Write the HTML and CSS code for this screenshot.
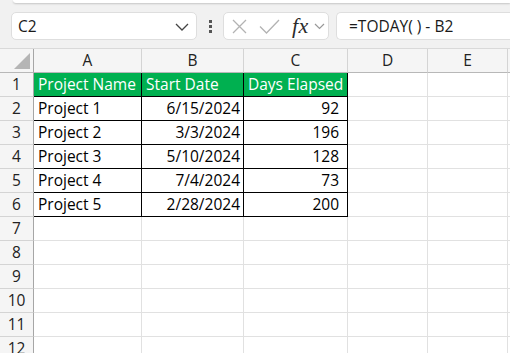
FILE: index.html
```html
<!DOCTYPE html>
<html>
<head>
<meta charset="utf-8">
<link rel="stylesheet" href="styles.css">
</head>
<body>
<div class="toolbar">
  <div class="top-strip"></div>
  <div class="bar">
    <div class="namebox">
      <span class="ref">C2</span>
      <svg class="chev" width="14" height="8" viewBox="0 0 14 8"><path d="M1 1 L7 7 L13 1" fill="none" stroke="#444" stroke-width="1.3"/></svg>
    </div>
    <div class="dots"><i></i><i></i><i></i></div>
    <div class="fbtns">
      <svg width="15" height="15" viewBox="0 0 15 15"><path d="M1 1 L14 14 M14 1 L1 14" stroke="#b3b3b3" stroke-width="1.3" fill="none"/></svg>
      <svg class="check" width="21" height="15" viewBox="0 0 21 15"><path d="M1 7.5 L7.5 14 L20 1" stroke="#b3b3b3" stroke-width="1.3" fill="none"/></svg>
      <span class="fx">fx</span>
      <svg width="11" height="7" viewBox="0 0 11 7"><path d="M1 1 L5.5 5.5 L10 1" fill="none" stroke="#999" stroke-width="1.2"/></svg>
    </div>
    <div class="formula">=TODAY( ) - B2</div>
  </div>
</div>
<div class="sheet">
  <div class="corner"><span class="tri"></span></div>
  <div class="ch">A</div><div class="ch">B</div><div class="ch">C</div><div class="ch">D</div><div class="ch">E</div><div class="ch edge"></div>

  <div class="rh">1</div>
  <div class="c t head">Project Name</div><div class="c t head">Start Date</div><div class="c t head">Days Elapsed</div><div class="c"></div><div class="c"></div><div class="c edge"></div>

  <div class="rh">2</div>
  <div class="c t">Project 1</div><div class="c t num">6/15/2024</div><div class="c t num wide">92</div><div class="c"></div><div class="c"></div><div class="c edge"></div>

  <div class="rh">3</div>
  <div class="c t">Project 2</div><div class="c t num">3/3/2024</div><div class="c t num wide">196</div><div class="c"></div><div class="c"></div><div class="c edge"></div>

  <div class="rh">4</div>
  <div class="c t">Project 3</div><div class="c t num">5/10/2024</div><div class="c t num wide">128</div><div class="c"></div><div class="c"></div><div class="c edge"></div>

  <div class="rh">5</div>
  <div class="c t">Project 4</div><div class="c t num">7/4/2024</div><div class="c t num wide">73</div><div class="c"></div><div class="c"></div><div class="c edge"></div>

  <div class="rh">6</div>
  <div class="c t">Project 5</div><div class="c t num">2/28/2024</div><div class="c t num wide">200</div><div class="c"></div><div class="c"></div><div class="c edge"></div>

  <div class="rh">7</div><div class="c"></div><div class="c"></div><div class="c"></div><div class="c"></div><div class="c"></div><div class="c edge"></div>
  <div class="rh">8</div><div class="c"></div><div class="c"></div><div class="c"></div><div class="c"></div><div class="c"></div><div class="c edge"></div>
  <div class="rh">9</div><div class="c"></div><div class="c"></div><div class="c"></div><div class="c"></div><div class="c"></div><div class="c edge"></div>
  <div class="rh">10</div><div class="c"></div><div class="c"></div><div class="c"></div><div class="c"></div><div class="c"></div><div class="c edge"></div>
  <div class="rh">11</div><div class="c"></div><div class="c"></div><div class="c"></div><div class="c"></div><div class="c"></div><div class="c edge"></div>
  <div class="rh">12</div><div class="c"></div><div class="c"></div><div class="c"></div><div class="c"></div><div class="c"></div><div class="c edge"></div>
</div>
</body>
</html>
```

FILE: styles.css
```css
html, body {
  margin: 0;
  padding: 0;
  width: 510px;
  height: 353px;
  overflow: hidden;
  background: #ffffff;
  font-family: "Open Sans", "Noto Sans", sans-serif;
}

.toolbar {
  height: 49px;
  box-sizing: border-box;
  background: #f1f1f1;
  border-bottom: 1px solid #d9d9d9;
}

.top-strip {
  height: 3px;
  margin-left: 13px;
  background: #ffffff;
  border-bottom-left-radius: 6px;
  box-shadow: 0 1px 2px rgba(0,0,0,0.18);
}

.bar {
  display: flex;
  align-items: center;
  margin-top: 9px;
  padding-left: 11px;
  height: 28px;
}

.namebox {
  width: 186px;
  height: 28px;
  box-sizing: border-box;
  background: #fff;
  border: 1px solid #dedede;
  border-radius: 5px;
  display: flex;
  align-items: center;
  justify-content: space-between;
  padding: 0 7px 0 6px;
}

.ref {
  font-size: 15.5px;
  color: #1a1a1a;
}

.chev {
  margin-top: 2px;
}

.dots {
  width: 26px;
  display: flex;
  flex-direction: column;
  align-items: center;
  gap: 2px;
}

.dots i {
  display: block;
  width: 3px;
  height: 3px;
  background: #555;
}

.fbtns {
  width: 106px;
  height: 28px;
  box-sizing: border-box;
  background: #fff;
  border: 1px solid #dedede;
  border-radius: 5px;
  display: flex;
  align-items: center;
  padding-left: 8px;
}

.fbtns .check {
  margin-left: 12px;
}

.fx {
  font-family: "Liberation Serif", "DejaVu Serif", serif;
  font-style: italic;
  font-size: 22px;
  color: #2b2b2b;
  margin-left: 12px;
  margin-right: 5px;
  letter-spacing: 0.5px;
  line-height: 1;
}

.formula {
  flex: 1;
  margin-left: 7px;
  height: 28px;
  box-sizing: border-box;
  background: #fff;
  border: 1px solid #dedede;
  border-right: none;
  border-radius: 5px 0 0 5px;
  font-size: 15.5px;
  color: #1a1a1a;
  padding-left: 12px;
  line-height: 26px;
}

.sheet {
  display: grid;
  grid-template-columns: 34px 108px 102px 104px 80px 80px 2px;
  grid-auto-rows: 24px;
}

.sheet > div {
  box-sizing: border-box;
}

.corner {
  background: #f5f5f5;
  border-right: 1px solid #a6a6a6;
  border-bottom: 1px solid #b8b8b8;
  position: relative;
}

.tri {
  position: absolute;
  right: 3px;
  bottom: 3px;
  width: 0;
  height: 0;
  border-left: 16px solid transparent;
  border-bottom: 16px solid #b5b5b5;
}

.ch {
  background: #f5f5f5;
  border-right: 1px solid #d4d4d4;
  border-bottom: 1px solid #b8b8b8;
  text-align: center;
  font-size: 15.5px;
  color: #222;
  line-height: 23px;
}

.rh {
  background: #f5f5f5;
  border-right: 1px solid #a6a6a6;
  border-bottom: 1px solid #d4d4d4;
  text-align: center;
  font-size: 15.5px;
  color: #222;
  line-height: 23px;
}

.c {
  border-right: 1px solid #e1e1e1;
  border-bottom: 1px solid #e1e1e1;
}

.c.edge, .ch.edge {
  border-right: none;
}

.t {
  border-right-color: #000;
  border-bottom-color: #000;
  font-size: 15.5px;
  color: #000;
  line-height: 23px;
  padding-left: 4px;
  white-space: nowrap;
  overflow: hidden;
}

.head {
  background: #00b050;
  color: #fff;
}

.num {
  text-align: right;
  padding-left: 0;
  padding-right: 3px;
}

.num.wide {
  padding-right: 8px;
}
```
